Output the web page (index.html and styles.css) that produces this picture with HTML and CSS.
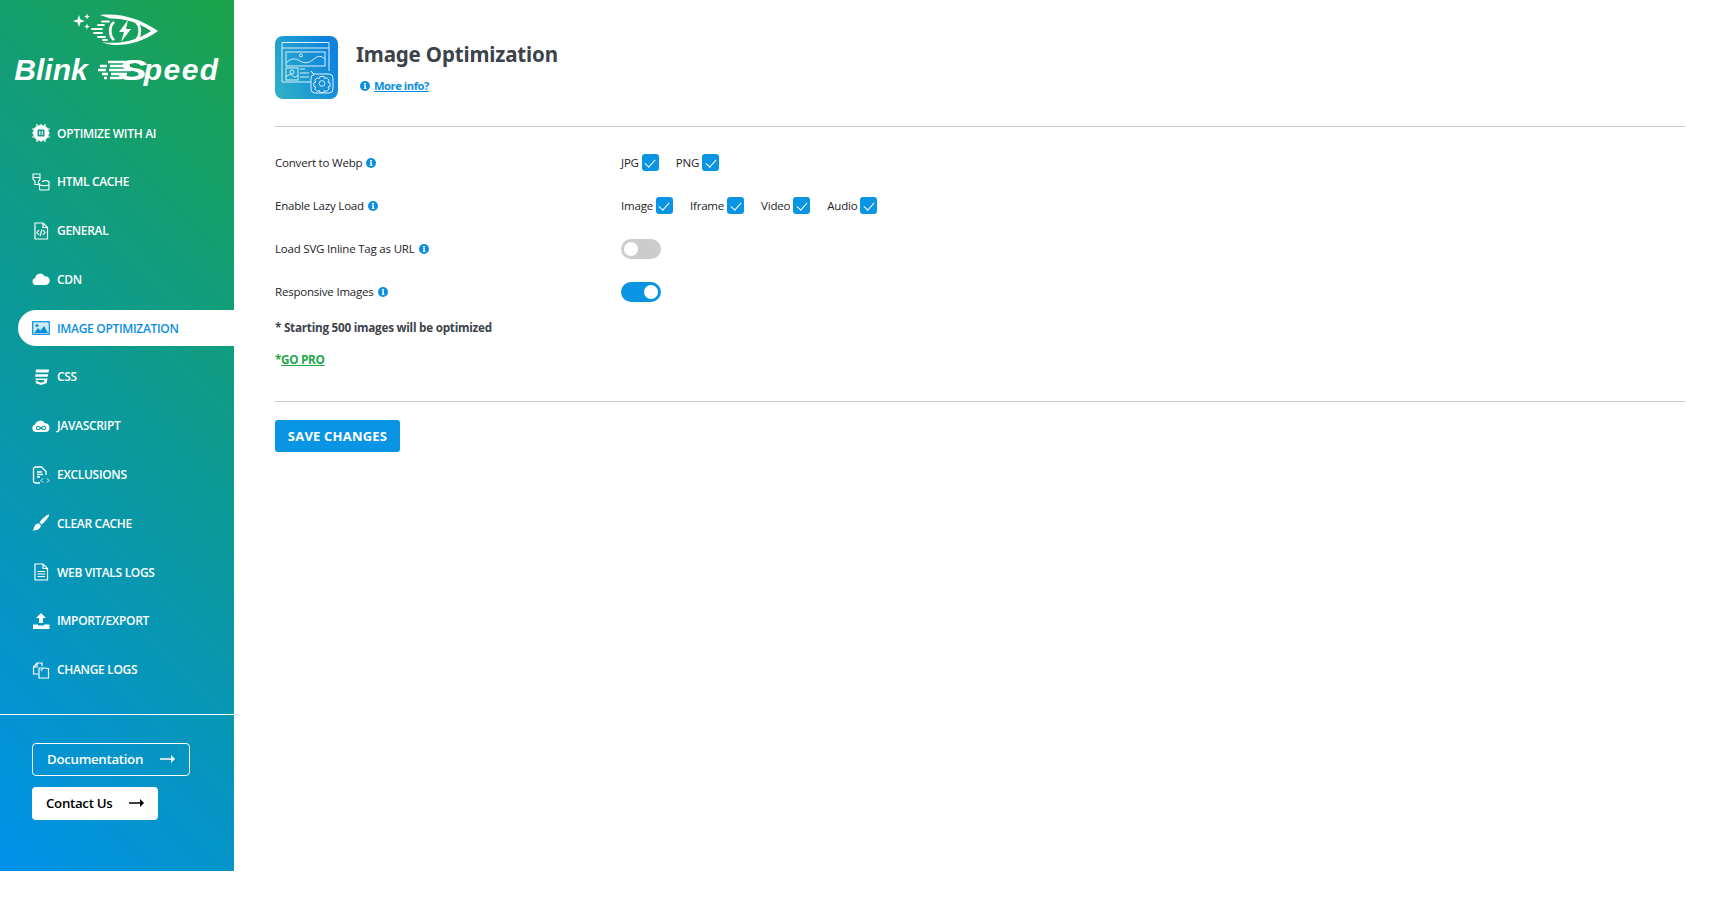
FILE: index.html
```html
<!DOCTYPE html>
<html lang="en">

<head>
    <meta charset="UTF-8">
    <meta name="viewport" content="width=device-width, initial-scale=1.0">
    <title>Blink Speed - Image Optimization</title>
    <link rel="stylesheet" href="styles.css">
</head>

<body>
    <div class="page">

        <aside class="sidebar">
            <div class="logo">
                <svg class="logo-eye" width="92" height="36" viewBox="0 0 92 36">
                    <path d="M7 2l1.500 4.500L13 8l-4.500 1.500L7 14l-1.500-4.500L1 8l4.500-1.500z" fill="#fff"/>
                    <path d="M15 .5l.8 2.200L18 3.500l-2.200.8L15 6.500l-.8-2.200L12 3.500l2.200-.8zM15 10.500l.8 2.200 2.200.8-2.200.8-.8 2.200-.8-2.200-2.200-.8 2.200-.8z" fill="#fff"/>
                    <path d="M28 2C50 0 68 6 86 18 72 28 58 32 44 32c-6 0-10-1-14-3 6 1 12 1 18 .5C60 28 70 24 79 18 66 9 50 5 38 5.500z" fill="#fff"/>
                    <path d="M30 8.500h7M26 12h6M20 16h10M22 20h8M26 24h7M31 27h4" stroke="#fff" stroke-width="1.800" stroke-linecap="round" fill="none"/>
                    <path d="M42 9c-5 4-5 14 0 18M64 9c5 4 5 14 0 18" stroke="#fff" stroke-width="2.800" fill="none"/>
                    <path d="M56 7l-9 12h5l-3 10 10-13h-5z" fill="#fff"/>
                </svg>
                <div class="logo-name">
                    <span>Blink</span>
                    <span class="logo-speed">
                        <svg class="logo-lines" width="36" height="24" viewBox="0 0 36 24">
                            <path d="M10 3h26M2 7h7M12 7h20M0 11h8M11 11h22M4 15h6M13 15h16M6 19h3M12 19h12" stroke="#fff" stroke-width="2.400" fill="none"/>
                        </svg>
                        <b class="logo-s">S</b><span class="logo-rest">peed</span>
                    </span>
                </div>
            </div>

            <ul class="menu">
                <li><a href="#">
                    <svg width="18" height="18" viewBox="0 0 18 18"><circle cx="9" cy="9" r="8" fill="#fff"/><rect x="3" y="3" width="12" height="12" rx="2" fill="#fff"/><rect x="5.500" y="5.500" width="7" height="7" rx="1" fill="#12958a"/><path d="M0 5h3M0 9h3M0 13h3M15 5h3M15 9h3M15 13h3M5 0v3M9 0v3M13 0v3M5 15v3M9 15v3M13 15v3" stroke="#fff" stroke-width="1.200"/><path d="M7.800 7v4M10.200 7v4" stroke="#fff" stroke-width="1.100"/></svg>
                    OPTIMIZE WITH AI</a></li>
                <li><a href="#">
                    <svg width="18" height="18" viewBox="0 0 18 18" fill="none" stroke="#fff" stroke-width="1.100"><path d="M1 1h7v5l-1.500 2.500v3H3V8.500L1 6zM1 4.500h7"/><path d="M7.500 10.500V16a1 1 0 0 0 1 1h7.500a1 1 0 0 0 1-1V8.500c-2-1-5-1-7 0"/><path d="M8 12c3 1 6 1 9 0"/></svg>
                    HTML CACHE</a></li>
                <li><a href="#">
                    <svg width="18" height="18" viewBox="0 0 18 18" fill="none" stroke="#fff" stroke-width="1.200"><path d="M3 1h8l4.500 4.500V17H3zM11 1v4.500h4.500"/><path d="M7 8l-2 2.500L7 13M11 8l2 2.500-2 2.500M9.800 7.500l-1.600 6.500"/></svg>
                    GENERAL</a></li>
                <li><a href="#">
                    <svg width="18" height="18" viewBox="0 0 18 18"><path d="M4 15a3.500 3.500 0 0 1-.8-6.900A5 5 0 0 1 12.600 6.300 4.400 4.400 0 0 1 14 15z" fill="#fff"/></svg>
                    CDN</a></li>
                <li class="active"><a href="#">
                    <svg width="18" height="18" viewBox="0 0 18 18"><rect x=".7" y="2.700" width="16.600" height="12.600" fill="#cfeafa" stroke="#0a8fe0" stroke-width="1.200"/><path d="M2 14l4-5 2.500 2.500L12 7l4 7z" fill="#0a8fe0"/><circle cx="5" cy="6.500" r="1.500" fill="#0a8fe0"/></svg>
                    IMAGE OPTIMIZATION</a></li>
                <li><a href="#">
                    <svg width="18" height="18" viewBox="0 0 18 18"><path d="M4 1.500h13l-.5 3H3.600zM3.400 6.200h12.800l-.4 2.600H3.200zM3.500 10.500h12l-.9 4.700L9 17l-5-1.800-.4-2.500h2.300l.2 1 2.900 1 3-1 .3-1.700H3.800z" fill="#fff"/></svg>
                    CSS</a></li>
                <li><a href="#">
                    <svg width="18" height="18" viewBox="0 0 18 18"><path d="M4 15a3.800 3.800 0 0 1-1-7.400A5.500 5.500 0 0 1 13 6.300a4.400 4.400 0 0 1 1 8.700z" fill="#fff"/><path d="M9 11c-1-1.200-2-1.700-3-1.700a1.500 1.500 0 0 0 0 3.200c1 0 2-.5 3-1.500s2-1.700 3-1.700a1.500 1.500 0 0 1 0 3.200c-1 0-2-.5-3-1.500z" fill="none" stroke="#0f9a90" stroke-width="1.100"/></svg>
                    JAVASCRIPT</a></li>
                <li><a href="#">
                    <svg width="18" height="18" viewBox="0 0 18 18" fill="none" stroke="#fff" stroke-width="1.300"><path d="M8 17H3.500a2 2 0 0 1-2-2V3a2 2 0 0 1 2-2h6l4.500 4.500V9"/><path d="M5 6h5M5 8.500h6M5 11h3"/><path d="M11 12.500l-2 2 2 2M15 12.500l2 2-2 2" stroke-width="1"/></svg>
                    EXCLUSIONS</a></li>
                <li><a href="#">
                    <svg width="18" height="18" viewBox="0 0 18 18"><path d="M17 .5c.5 2-4.500 8-7.500 10L7.500 8.500C9.500 5 15 .2 17 .5z" fill="#fff"/><path d="M7 9.500l1.800 1.800c0 3-3 5.700-8.300 5 2-1 1-2.800 2.500-5 1-1.300 2.600-1.800 4-1.800z" fill="#fff"/></svg>
                    CLEAR CACHE</a></li>
                <li><a href="#">
                    <svg width="18" height="18" viewBox="0 0 18 18" fill="none" stroke="#fff" stroke-width="1.200"><path d="M3 1h8l4.500 4.500V17H3zM11 1v4.500h4.500"/><path d="M5.500 8.500h7.500M5.500 11h7.500M5.500 13.500h7.500"/></svg>
                    WEB VITALS LOGS</a></li>
                <li><a href="#">
                    <svg width="18" height="18" viewBox="0 0 18 18"><path d="M9 1l5 5h-3v5H7V6H4z" fill="#fff"/><path d="M1 12.500h5v1h6v-1h5.500V17H1z" fill="#fff"/></svg>
                    IMPORT/EXPORT</a></li>
                <li><a href="#">
                    <svg width="18" height="18" viewBox="0 0 18 18" fill="none" stroke="#fff" stroke-width="1.200"><path d="M6 13H1.500V6L5 2h5v3"/><path d="M7 7h5l4.500 0.500V17H7z"/><path d="M5 2v4H1.500"/><path d="M9 10l2-3"/></svg>
                    CHANGE LOGS</a></li>
            </ul>

            <div class="side-links">
                <a class="btn-doc" href="#">Documentation
                    <svg width="15" height="8" viewBox="0 0 15 8"><path d="M0 3.300h11V0l4 4-4 4V4.800H0z" fill="#fff"/></svg>
                </a>
                <a class="btn-contact" href="#">Contact Us
                    <svg width="15" height="8" viewBox="0 0 15 8"><path d="M0 3.300h11V0l4 4-4 4V4.800H0z" fill="#000"/></svg>
                </a>
            </div>
        </aside>

        <main class="content">
            <header class="head">
                <svg class="head-icon" width="63" height="63" viewBox="0 0 63 63">
                    <defs>
                        <linearGradient id="headGrad" x1="0" y1="1" x2="1" y2="0.500">
                            <stop offset="0" stop-color="#2fb4c4"/>
                            <stop offset="1" stop-color="#0f84de"/>
                        </linearGradient>
                    </defs>
                    <rect width="63" height="63" rx="8" fill="url(#headGrad)"/>
                    <g fill="none" stroke="#d8f0f8" stroke-width="1">
                        <path d="M37 46H7V6.500h47V35M7 12h47"/>
                        <rect x="11" y="16" width="39" height="14"/>
                        <path d="M11 27c5-5 9-5 14-2s9 2 14-2 7-3 11 0"/>
                        <circle cx="26" cy="19.500" r="1.500"/>
                        <rect x="11" y="32" width="12" height="12"/>
                        <path d="M11 41c3-3 5-3 7-1s3 1 5-1"/>
                        <circle cx="17" cy="36" r="2"/>
                        <path d="M25 33h5M25 37h9M25 41h9"/>
                        <path d="M39 38h15a4 4 0 0 1 4 4v11a4 4 0 0 1-4 4H40a4 4 0 0 1-4-4V42a3 3 0 0 1 3-3l-3-4z" fill="#1a8fd8"/>
                        <circle cx="47" cy="47.500" r="2.800"/>
                        <path d="M45 40.500h4l.6 2 2-.8 2.400 2.400-1 2 2 .8v3.500l-2 .6 1 2-2.500 2.500-2-1-.6 2h-4l-.6-2-2 1-2.500-2.500 1-2-2-.6v-3.500l2-.8-1-2 2.400-2.400 2 .8z"/>
                    </g>
                </svg>
                <div class="head-text">
                    <h1>Image Optimization</h1>
                    <div class="more">
                        <svg class="info" width="10" height="10" viewBox="0 0 10 10"><circle cx="5" cy="5" r="5" fill="#0a8fe0"/><path d="M4 2h2v1.500H4zM3.800 4.300H6v2.900h.6V8H3.800v-.8h.6V5.100h-.6z" fill="#fff"/></svg>
                        <a href="#">More info?</a>
                    </div>
                </div>
            </header>

            <hr>

            <section class="settings">
                <div class="row">
                    <div class="row-label">Convert to Webp
                        <svg class="info" width="10" height="10" viewBox="0 0 10 10"><circle cx="5" cy="5" r="5" fill="#0a8fe0"/><path d="M4 2h2v1.500H4zM3.800 4.300H6v2.900h.6V8H3.800v-.8h.6V5.100h-.6z" fill="#fff"/></svg>
                    </div>
                    <div class="row-opts">
                        <label class="opt">JPG <input type="checkbox" checked></label>
                        <label class="opt">PNG <input type="checkbox" checked></label>
                    </div>
                </div>
                <div class="row">
                    <div class="row-label">Enable Lazy Load
                        <svg class="info" width="10" height="10" viewBox="0 0 10 10"><circle cx="5" cy="5" r="5" fill="#0a8fe0"/><path d="M4 2h2v1.500H4zM3.800 4.300H6v2.900h.6V8H3.800v-.8h.6V5.100h-.6z" fill="#fff"/></svg>
                    </div>
                    <div class="row-opts">
                        <label class="opt">Image <input type="checkbox" checked></label>
                        <label class="opt">Iframe <input type="checkbox" checked></label>
                        <label class="opt">Video <input type="checkbox" checked></label>
                        <label class="opt">Audio <input type="checkbox" checked></label>
                    </div>
                </div>
                <div class="row">
                    <div class="row-label">Load SVG Inline Tag as URL
                        <svg class="info" width="10" height="10" viewBox="0 0 10 10"><circle cx="5" cy="5" r="5" fill="#0a8fe0"/><path d="M4 2h2v1.500H4zM3.800 4.300H6v2.900h.6V8H3.800v-.8h.6V5.100h-.6z" fill="#fff"/></svg>
                    </div>
                    <div class="row-opts"><span class="toggle"></span></div>
                </div>
                <div class="row">
                    <div class="row-label">Responsive Images
                        <svg class="info" width="10" height="10" viewBox="0 0 10 10"><circle cx="5" cy="5" r="5" fill="#0a8fe0"/><path d="M4 2h2v1.500H4zM3.800 4.300H6v2.900h.6V8H3.800v-.8h.6V5.100h-.6z" fill="#fff"/></svg>
                    </div>
                    <div class="row-opts"><span class="toggle on"></span></div>
                </div>
                <p class="note">* Starting 500 images will be optimized</p>
                <p class="pro">*<a href="#">GO PRO</a></p>
            </section>

            <hr>

            <button class="save" type="button">SAVE CHANGES</button>
        </main>

    </div>
</body>

</html>
```

FILE: styles.css
```css
* { box-sizing: border-box; }
body { margin: 0; background: #fff; font-family: "Open Sans", "Noto Sans", sans-serif; color: #1d2327; }
a { text-decoration: none; }
.page { display: flex; height: 871px; }

/* sidebar */
.sidebar { width: 234px; flex: none; height: 871px; background: linear-gradient(45deg, #0091ea 0%, #0c9a94 55%, #1ca34a 100%); }
.logo { height: 115px; padding-top: 13px; display: flex; flex-direction: column; align-items: center; }
.logo-eye { margin-left: 2px; }
.logo-name { display: flex; gap: 10px; margin-top: 4px; font: italic 700 30px/34px "Liberation Sans", sans-serif; color: #fff; white-space: nowrap; }
.logo-speed { position: relative; padding-left: 20px; }
.logo-s { display: inline-block; font-weight: 700; transform: scaleX(1.45); transform-origin: left; margin-right: 6px; }
.logo-rest { letter-spacing: 1.500px; }
.logo-lines { position: absolute; left: 0; top: 6px; }

.menu { list-style: none; margin: 0; padding: 0; display: flex; flex-direction: column; gap: 12.8px; }
.menu li { margin-left: 18px; height: 36px; border-radius: 18px 0 0 18px; }
.menu a { display: flex; align-items: center; gap: 7px; height: 36px; padding-left: 14px; color: #fff; font-size: 12px; font-weight: 600; letter-spacing: -.32px; }
.menu svg { flex: none; }
.menu .active { background: #fff; }
.menu .active a { color: #0a8fe0; }

.side-links { margin-top: 26px; border-top: 1.500px solid #fff; padding: 28px 0 0 32px; display: flex; flex-direction: column; align-items: flex-start; gap: 11px; }
.side-links a { display: flex; align-items: center; height: 33px; padding: 0 14px; border-radius: 4px; font-size: 13.300px; font-weight: 600; letter-spacing: -.32px; }
.btn-doc { color: #fff; border: 1px solid #fff; gap: 17px; }
.btn-contact { color: #000; background: #fff; gap: 17px; }

/* main */
.content { flex: 1; padding: 36px 39px 0 41px; }
.head { display: flex; height: 63px; margin-bottom: 27px; }
.head-icon { flex: none; }
.head-text { margin-left: 18px; }
.head-text h1 { margin: 5px 0 0; font: 700 20.500px/26px "Noto Sans", sans-serif; color: #3c434a; letter-spacing: -.15px; }
.more { display: flex; align-items: center; gap: 4px; margin: 11px 0 0 4px; font-size: 11.200px; font-weight: 700; letter-spacing: -.45px; }
.more a { color: #0a8fe0; text-decoration: underline; }
hr { margin: 0; border: 0; border-top: 1px solid #c8c8c8; }

.settings { padding-top: 14px; }
.row { display: flex; align-items: center; height: 43px; font-size: 11.500px; letter-spacing: -.2px; }
.row-label { width: 346px; flex: none; display: flex; align-items: center; gap: 4px; }
.row-opts { display: flex; align-items: center; gap: 17px; }
.info { flex: none; }
.opt { display: flex; align-items: center; gap: 3px; }
.opt input { appearance: none; margin: 0; position: relative; width: 17px; height: 17px; border-radius: 3px; background: #0a94e4; }
.opt input::after { content: ""; position: absolute; left: 5.500px; top: 2.500px; width: 5px; height: 9px; border: solid #fff; border-width: 0 1.400px 1.400px 0; transform: rotate(42deg); }

.toggle { display: block; position: relative; width: 40px; height: 20px; border-radius: 10px; background: #ccc; }
.toggle::after { content: ""; position: absolute; left: 3px; top: 3px; width: 14px; height: 14px; border-radius: 50%; background: #fff; }
.toggle.on { background: #0a94e4; }
.toggle.on::after { left: 23px; }

.note { margin: 5px 0 0; font-size: 11.700px; font-weight: 700; line-height: 18px; color: #3c434a; letter-spacing: -.24px; }
.pro { margin: 14px 0 33px; font-size: 11.800px; font-weight: 700; line-height: 18px; color: #22a94a; letter-spacing: -.35px; }
.pro a { color: #22a94a; text-decoration: underline; }

.save { display: block; margin-top: 18px; width: 125px; height: 32px; padding: 0; border: 0; border-radius: 3px; background: #0a94e4; color: #fff; font: 700 13px "Open Sans", sans-serif; letter-spacing: .2px; }
```
